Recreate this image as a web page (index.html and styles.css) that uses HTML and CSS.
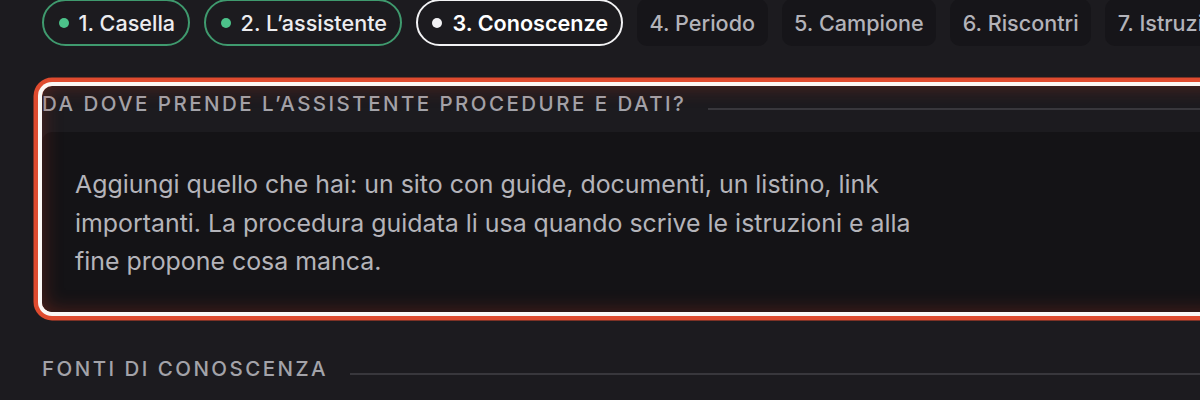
FILE: index.html
```html
<!DOCTYPE html>
<html lang="it">
<head>
<meta charset="utf-8">
<title>Conoscenze</title>
<link rel="stylesheet" href="styles.css">
</head>
<body>
<div class="page">
  <nav class="steps">
    <span class="chip done"><span class="dot"></span>1. Casella</span>
    <span class="chip done"><span class="dot"></span>2. L’assistente</span>
    <span class="chip current"><span class="dot"></span>3. Conoscenze</span>
    <span class="chip todo">4. Periodo</span>
    <span class="chip todo">5. Campione</span>
    <span class="chip todo">6. Riscontri</span>
    <span class="chip todo">7. Istruzioni</span>
  </nav>

  <section class="section highlighted">
    <div class="section-head">
      <h2 class="section-title">Da dove prende l’assistente procedure e dati?</h2>
      <span class="rule"></span>
    </div>
    <div class="card">
      <p class="card-text">Aggiungi quello che hai: un sito con guide, documenti, un listino, link importanti. La procedura guidata li usa quando scrive le istruzioni e alla fine propone cosa manca.</p>
    </div>
  </section>

  <section class="section">
    <div class="section-head">
      <h2 class="section-title">Fonti di conoscenza</h2>
      <span class="rule"></span>
    </div>
  </section>
</div>
</body>
</html>
```

FILE: styles.css
```css
* { box-sizing: border-box; }

html, body {
  margin: 0;
  padding: 0;
  background: #1c1b1f;
  height: 100%;
  overflow: hidden;
}

body {
  font-family: Inter, "Noto Sans", "Liberation Sans", sans-serif;
  color: #b4b4ba;
}

.page {
  padding: 0 0 0 42px;
  width: 1400px;
}

.steps {
  display: flex;
  gap: 14px;
  margin-top: -1px;
  white-space: nowrap;
}

.chip {
  display: inline-flex;
  align-items: center;
  height: 47px;
  padding: 0 12.5px;
  font-size: 21.6px;
  font-weight: 500;
  border-radius: 10px;
  flex: none;
}

.chip .dot {
  width: 10px;
  height: 10px;
  border-radius: 50%;
  margin-right: 10px;
}

.chip.done {
  border: 2px solid #3f9a6e;
  border-radius: 999px;
  padding: 0 13px 0 14.5px;
  color: #ececef;
}
.chip.done .dot { background: #4cc38a; }

.chip.current {
  border: 2px solid #f2f2f4;
  border-radius: 999px;
  padding: 0 13px 0 14.5px;
  color: #ffffff;
  font-weight: 600;
}
.chip.current .dot { background: #f2f2f4; }

.chip.todo {
  background: #161519;
  color: #b3b3b9;
}

.section {
  position: relative;
  margin-top: 40px;
}

.section + .section {
  margin-top: 39px;
}

.highlighted {
  border-radius: 10px;
  box-shadow: 0 0 0 4px #fbf7f5, 0 0 0 8.5px #df4b2f;
}

.highlighted::after {
  content: "";
  position: absolute;
  inset: 0;
  border-radius: 10px;
  pointer-events: none;
  box-shadow: inset 0 0 20px rgba(205, 60, 35, 0.34);
}

.section-head {
  display: flex;
  align-items: flex-end;
  gap: 22px;
  padding-top: 6px;
  height: 30px;
}

.section-title {
  margin: 0;
  font-size: 20.5px;
  line-height: 24px;
  font-weight: 500;
  letter-spacing: 0.12em;
  text-transform: uppercase;
  color: #a3a3a9;
  white-space: nowrap;
}

.rule {
  flex: 1;
  height: 2px;
  background: #38373c;
  margin-bottom: 6px;
}

.card {
  margin-top: 16px;
  background: #141316;
  border-radius: 10px;
  padding: 33px 33px 31px;
}

.card-text {
  margin: 0;
  max-width: 880px;
  font-size: 24.9px;
  line-height: 38.5px;
  color: #b4b4ba;
}
```
